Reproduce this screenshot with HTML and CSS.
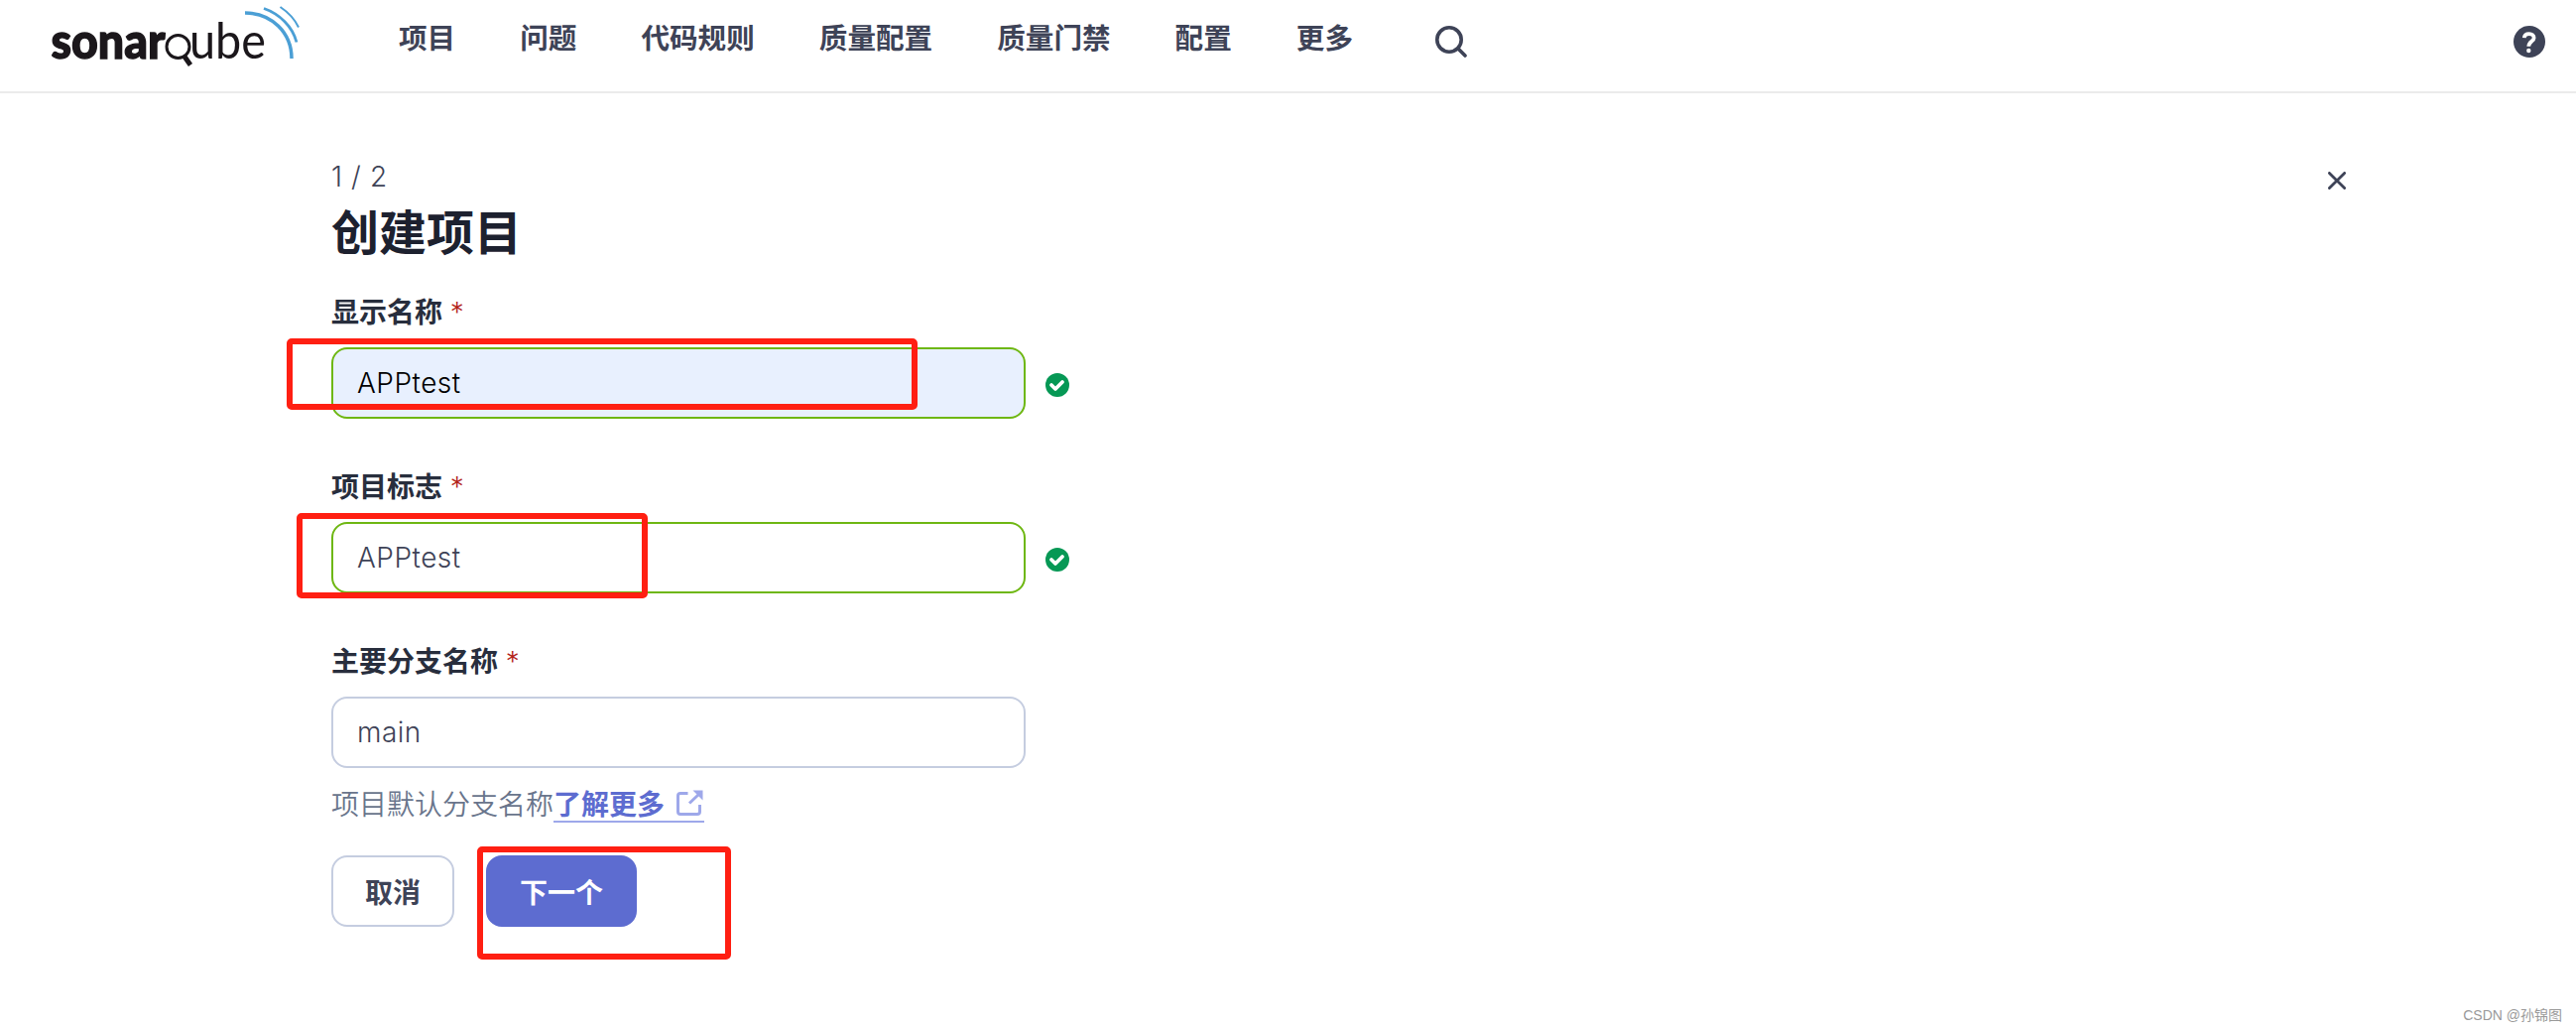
FILE: index.html
```
<!DOCTYPE html>
<html lang="zh-CN">
<head>
    <meta charset="UTF-8">
    <meta name="viewport" content="width=device-width, initial-scale=1.0">
    <title>创建项目 - SonarQube</title>
    <link rel="stylesheet" href="styles.css">
</head>
<body>

<header class="navbar">
    <svg class="logo" width="256" height="72" viewBox="0 0 256 72">
        <text class="logo-bold" x="-0.500" y="59" textLength="115" lengthAdjust="spacingAndGlyphs">sonar</text>
        <g fill="none" stroke="#1b171b">
            <circle cx="127.500" cy="47" r="11.500" stroke-width="3"/>
            <path d="M134 57l6 8.500" stroke-width="5"/>
        </g>
        <text class="logo-light" x="139" y="59" textLength="77" lengthAdjust="spacingAndGlyphs">ube</text>
        <g fill="none" stroke="#4b9fd5">
            <path d="M195 13C222 13 242 33 242 59" stroke-width="3.500"/>
            <path d="M214 8.500C230 14 243 27 247 42.500" stroke-width="2.800"/>
            <path d="M230.500 7C238 12 245 19 249 27.500" stroke-width="2"/>
        </g>
    </svg>
    <nav class="menu">
        <a>项目</a>
        <a>问题</a>
        <a>代码规则</a>
        <a>质量配置</a>
        <a>质量门禁</a>
        <a>配置</a>
        <a>更多</a>
    </nav>
    <svg class="search" width="32" height="32" viewBox="0 0 32 32" fill="none" stroke="#3e4357" stroke-width="3.600" stroke-linecap="round">
        <circle cx="14" cy="14" r="12.200"/>
        <path d="M23 23l7 7"/>
    </svg>
    <svg class="help" width="32" height="32" viewBox="0 0 32 32">
        <circle cx="16" cy="16" r="16" fill="#3e4357"/>
        <path d="M10.800 12.200C11 9.600 13 8.200 15.800 8.200C18.600 8.200 20.600 9.800 20.600 12.200C20.600 15.600 15.300 15.600 15.300 20.800" fill="none" stroke="#fff" stroke-width="3.800"/>
        <circle cx="15.300" cy="25" r="2.200" fill="#fff"/>
    </svg>
</header>

<main class="page">
    <div class="top">
        <div>
            <div class="step">1 / 2</div>
            <h1>创建项目</h1>
        </div>
        <svg class="close" width="18" height="18" viewBox="0 0 18 18" stroke="#3e4357" stroke-width="2.800" stroke-linecap="round">
            <path d="M1.400 1.400l15.200 15.200M16.600 1.400L1.400 16.600"/>
        </svg>
    </div>

    <div class="field">
        <label>显示名称 <em>*</em></label>
        <div class="row">
            <div class="input valid filled">APPtest</div>
            <svg width="24" height="24" viewBox="0 0 24 24">
                <circle cx="12" cy="12" r="12" fill="#069855"/>
                <path d="M6 12l4 4 7-7" fill="none" stroke="#fff" stroke-width="3.800" stroke-linecap="round" stroke-linejoin="round"/>
            </svg>
        </div>
        <div class="mark mark-name"></div>
    </div>

    <div class="field">
        <label>项目标志 <em>*</em></label>
        <div class="row">
            <div class="input valid">APPtest</div>
            <svg width="24" height="24" viewBox="0 0 24 24">
                <circle cx="12" cy="12" r="12" fill="#069855"/>
                <path d="M6 12l4 4 7-7" fill="none" stroke="#fff" stroke-width="3.800" stroke-linecap="round" stroke-linejoin="round"/>
            </svg>
        </div>
        <div class="mark mark-key"></div>
    </div>

    <div class="field">
        <label>主要分支名称 <em>*</em></label>
        <div class="input">main</div>
    </div>

    <div class="note">项目默认分支名称<a>了解更多
        <svg width="28" height="28" viewBox="0 0 28 28" fill="none" stroke="#9ea8ea" stroke-width="3">
            <path d="M12.500 3.500H5a2.500 2.500 0 0 0-2.500 2.500V22A2.500 2.500 0 0 0 5 24.500H22a2.500 2.500 0 0 0 2.500-2.500V15"/>
            <path d="M14 13.500L24 4"/>
            <path d="M17.500 0.500H27.500V10.500Z" fill="#9ea8ea" stroke="none"/>
        </svg></a>
    </div>

    <div class="buttons">
        <button class="cancel">取消</button>
        <button class="next">下一个</button>
        <div class="mark mark-next"></div>
    </div>
</main>

<div class="watermark">CSDN @孙锦图</div>

</body>
</html>
```
FILE: styles.css
```
* {
    box-sizing: border-box;
}

body {
    margin: 0;
    height: 1039px;
    background: #fff;
    color: #3e4357;
    font-family: Inter, "Noto Sans CJK SC", sans-serif;
    font-size: 28px;
    overflow: hidden;
}

.navbar {
    display: flex;
    height: 94px;
    padding: 0 31px 0 52px;
    border-bottom: 2px solid #ebebeb;
}

.logo-bold,
.logo-light {
    font-family: Lato, sans-serif;
    font-size: 50px;
    fill: #1b171b;
}

.logo-bold {
    font-weight: 900;
    stroke: #1b171b;
    stroke-width: 1.4px;
}

.menu {
    display: flex;
    gap: 65px;
    margin-left: 94px;
    font-size: 28.6px;
    font-weight: 700;
    line-height: 78px;
}

.search {
    margin: 26px 0 0 83px;
}

.help {
    margin: 26px 0 0 auto;
}

.page {
    padding: 66px 232px 0 334px;
}

.top {
    display: flex;
    justify-content: space-between;
    height: 130px;
}

.step {
    line-height: 36px;
    font-weight: 300;
    letter-spacing: 0.6px;
}

h1 {
    margin: 7px 0 0;
    font-size: 48px;
    line-height: 64px;
    color: #1d212f;
}

.close {
    margin-top: 13px;
}

.field {
    position: relative;
    height: 176px;
}

label {
    display: block;
    height: 60px;
    line-height: 50px;
    font-weight: 700;
    color: #282e3d;
}

em {
    margin-left: 1px;
    font-style: normal;
    font-weight: 300;
    color: #b42318;
}

.row {
    display: flex;
    align-items: center;
    gap: 20px;
}

.row svg {
    margin-top: 4px;
}

.input {
    width: 700px;
    height: 72px;
    padding: 0 24px;
    border: 2px solid #c5cde0;
    border-radius: 16px;
    line-height: 69px;
    font-weight: 300;
    letter-spacing: 0.5px;
}

.valid {
    border-color: #6eb712;
}

.filled {
    background: #e8f0fe;
    color: #000;
}

.note {
    display: flex;
    height: 44px;
    margin-top: -29px;
    line-height: 44px;
    font-weight: 350;
    color: #69758c;
}

.note a {
    display: flex;
    align-items: center;
    gap: 11px;
    height: 40px;
    padding: 6px 1px 0 0;
    border-bottom: 2px solid #9ea8ea;
    font-weight: 700;
    color: #5d6cd0;
}

.note svg {
    margin-top: -3px;
}

.buttons {
    position: relative;
    display: flex;
    gap: 32px;
    margin-top: 29px;
}

button {
    height: 72px;
    padding: 0 0 1px;
    border: 2px solid #c5cde0;
    border-radius: 16px;
    background: #fff;
    color: #3e4357;
    font: inherit;
    font-weight: 700;
}

.cancel {
    width: 124px;
}

.next {
    width: 152px;
    border-color: #5d6cd0;
    background: #5d6cd0;
    color: #fff;
}

/* red frames over the form */
.mark {
    position: absolute;
    border: 6px solid #ff1f12;
    border-radius: 5px;
}

.mark-name {
    left: -45px;
    top: 51px;
    width: 636px;
    height: 72px;
}

.mark-key {
    left: -35px;
    top: 51px;
    width: 354px;
    height: 86px;
}

.mark-next {
    left: 147px;
    top: -9px;
    width: 256px;
    height: 114px;
}

.watermark {
    position: absolute;
    right: 14px;
    bottom: 4px;
    font-family: "Liberation Sans", "Noto Sans CJK SC", sans-serif;
    font-size: 14px;
    line-height: 24px;
    color: #999;
}
```
